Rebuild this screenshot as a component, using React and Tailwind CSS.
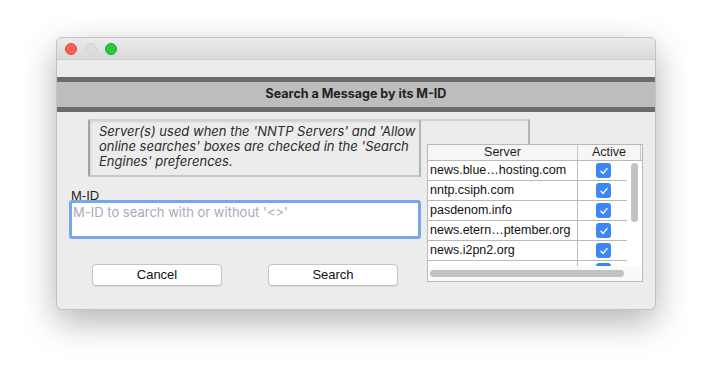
const SERVERS = [
  'news.blue…hosting.com',
  'nntp.csiph.com',
  'pasdenom.info',
  'news.etern…ptember.org',
  'news.i2pn2.org',
  '',
]

function Check() {
  return (
    <span className="flex h-[15px] w-[15px] items-center justify-center rounded-[3px] bg-[#3c87f5]">
      <svg width="10" height="10" viewBox="0 0 10 10" fill="none">
        <path d="M2 5.3 L4.1 7.4 L8 2.6" stroke="white" strokeWidth="1.4" strokeLinecap="round" strokeLinejoin="round" />
      </svg>
    </span>
  )
}

function ServerTable() {
  return (
    <div className="absolute left-[370px] top-[106px] flex h-[138px] w-[216px] flex-col border border-[#b9b9b9] bg-white">
      {/* Header */}
      <div className="flex h-[16px] border-b border-[#b9b9b9] bg-[#f6f6f6] text-[12.5px] leading-[15px] text-[#1e1e1e]">
        <div className="w-[150px] border-r border-[#c8c8c8] text-center">Server</div>
        <div className="w-[63px] border-r border-[#c8c8c8] text-center">Active</div>
      </div>
      {/* Body */}
      <div className="flex h-[105px] overflow-hidden">
        <div className="flex w-[199px] flex-col">
          {SERVERS.map((s, i) => (
            <div key={i} className="flex h-[20px] shrink-0 border-b border-[#b9b9b9]">
              <div className="w-[150px] border-r border-[#b9b9b9] pl-[2px] text-[12.5px] leading-[19px] text-[#111]">{s}</div>
              <div className="flex flex-1 items-center justify-center pl-[2px]">
                <Check />
              </div>
            </div>
          ))}
        </div>
        <div className="flex flex-1 justify-center pt-[2px]">
          <div className="h-[59px] w-[7px] rounded-full bg-[#c2c2c2]" />
        </div>
      </div>
      {/* Horizontal scrollbar */}
      <div className="flex flex-1 items-center bg-[#fafafa] pl-[2px]">
        <div className="h-[7px] w-[194px] rounded-full bg-[#c2c2c2]" />
      </div>
    </div>
  )
}

export default function App() {
  return (
    <div className="h-[384px] w-[712px] bg-white pl-[56px] pt-[37px]" style={{ fontFamily: '"Liberation Sans", Arial, sans-serif' }}>
      <div className="relative flex h-[273px] w-[600px] flex-col overflow-hidden rounded-[6px] border border-[#c2c2c2] bg-[#ececec] shadow-[0_12px_34px_rgba(0,0,0,0.3)]">
        {/* Title bar */}
        <div className="flex h-[22px] shrink-0 items-center gap-[8px] border-b border-[#cbcbcb] bg-gradient-to-b from-[#ebebeb] to-[#d9d9d9] pl-[8px]">
          <span className="h-[12px] w-[12px] rounded-full border border-[#e0443e] bg-[#fe5f57]" />
          <span className="h-[12px] w-[12px] rounded-full border border-[#cfcfcf] bg-[#dddddd]" />
          <span className="h-[12px] w-[12px] rounded-full border border-[#1aab29] bg-[#28c840]" />
        </div>

        <div className="h-[17px] shrink-0" />

        {/* Heading band */}
        <div className="h-[5px] shrink-0 bg-[#6b6b6b]" />
        <div className="flex h-[25px] shrink-0 items-center justify-center bg-[#bdbdbd] font-['Inter',sans-serif] text-[12.5px] font-bold text-[#222]">
          Search a Message by its M-ID
        </div>
        <div className="h-[5px] shrink-0 bg-[#6b6b6b]" />

        {/* Content */}
        <div className="flex flex-col pt-[7px]">
          <div className="flex pl-[31px]">
            <div className="h-[58px] w-[331px] border-b-2 border-l-2 border-t-2 border-b-[#c9c9c9] border-l-[#a3a3a3] border-t-[#d2d2d2] pl-[9px] pt-[3px] font-['Inter',sans-serif] text-[13px] italic leading-[15px] text-[#2b2b2b] shadow-[inset_1px_1px_2px_rgba(0,0,0,0.12)]">
              Server(s) used when the 'NNTP Servers' and 'Allow online searches' boxes are checked in the 'Search Engines' preferences.
            </div>
            <div className="h-[58px] w-[111px] border-l-2 border-r-2 border-t-2 border-l-[#b4b4b4] border-r-[#b4b4b4] border-t-[#d2d2d2]" />
          </div>

          <div className="mt-[11px] pl-[14px] text-[13px] leading-[16px] text-[#222]">M-ID</div>

          <div className="ml-[12px] mt-[-4px] h-[39px] w-[352px] rounded-[3px] border-[3px] border-[#78a6ea] bg-white pl-[1px] font-['Inter',sans-serif] text-[13px] leading-[18px] text-[#aaa8ba]">
            M-ID to search with or without '&lt;&gt;'
          </div>

          <div className="mt-[25px] flex gap-[46px] pl-[35px]">
            <button className="h-[22px] w-[130px] rounded-[4px] border border-[#c4c4c4] bg-white text-[13px] text-[#111] shadow-[0_1px_0_rgba(0,0,0,0.08)]">Cancel</button>
            <button className="h-[22px] w-[130px] rounded-[4px] border border-[#c4c4c4] bg-white text-[13px] text-[#111] shadow-[0_1px_0_rgba(0,0,0,0.08)]">Search</button>
          </div>
        </div>

        <ServerTable />
      </div>
    </div>
  )
}
